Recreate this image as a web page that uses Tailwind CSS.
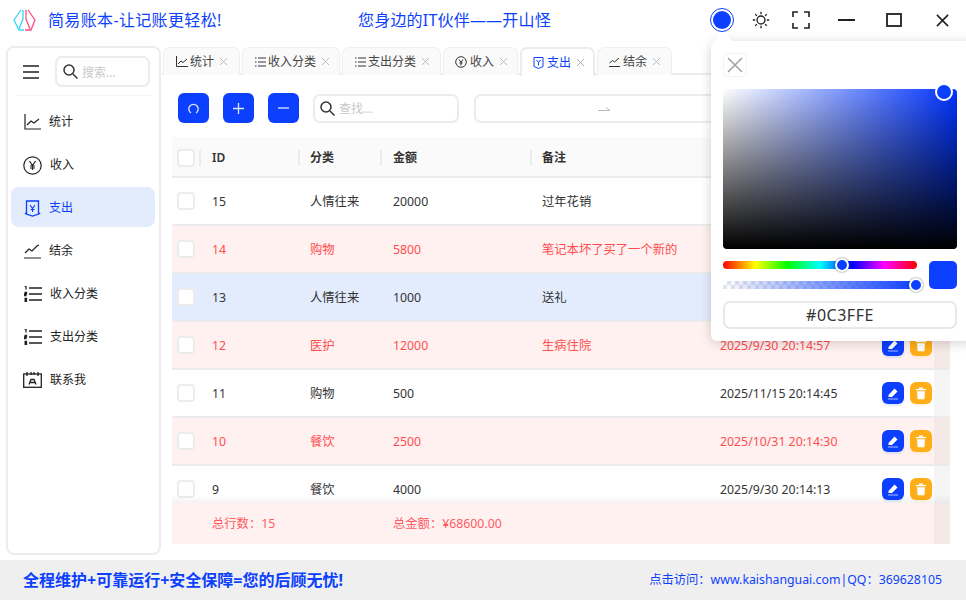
<!DOCTYPE html>
<html lang="zh-CN">
<head>
  <meta charset="UTF-8" />
  <title>简易账本</title>
  <script src="https://cdn.jsdelivr.net/npm/@tailwindcss/browser@4"></script>
</head>
<body class="w-[966px] h-[600px] overflow-hidden bg-white relative text-[#333] text-[12px] font-['Noto_Sans','Noto_Sans_CJK_SC',sans-serif]">
  <!-- title bar -->
  <header class="h-[46px] flex items-center pl-[13px] text-[#0c3ffe] text-[16px]">
    <svg class="w-[23px] h-[24px] -mt-[6px]" viewBox="0 0 23 24" fill="none" stroke-width="1.3">
      <path d="M8 2 L1 12 L6 22 H11" stroke="#33d6ff"/>
      <path d="M15 2 L22 12 L18 22 H12" stroke="#ff4d7d"/>
      <path d="M10 2 V11 L6 21" stroke="#33d6ff"/>
      <path d="M13 2 V11 L17 21" stroke="#ff4d7d"/>
    </svg>
    <span class="ml-[12px] w-[311px] -mt-[6px] whitespace-nowrap tracking-[0.35px]">简易账本-让记账更轻松!</span>
    <span class="-mt-[6px] whitespace-nowrap tracking-[0.2px] -ml-px">您身边的IT伙伴——开山怪</span>
    <div class="flex items-center ml-auto -mt-[6px] relative h-6 w-[250px] shrink-0">
      <span class="absolute left-[-6px] w-[24px] h-[24px] rounded-full border border-[#0c3ffe] p-[2px]"><span class="block w-full h-full rounded-full bg-[#0c3ffe]"></span></span>
      <svg class="absolute left-[36px] w-[18px] h-[18px]" viewBox="0 0 18 18" fill="none" stroke="#222" stroke-width="1.3"><circle cx="9" cy="9" r="4"/><path d="M9 .8v2.4M9 14.8v2.4M.8 9h2.4M14.8 9h2.400M3.200 3.200 4.900 4.900M13.100 13.100l1.700 1.700M3.200 14.800l1.700-1.700M13.100 4.900l1.700-1.700"/></svg>
      <svg class="absolute left-[76px] w-[18px] h-[18px]" viewBox="0 0 18 18" fill="none" stroke="#222" stroke-width="1.6"><path d="M1 6V1h5M12 1h5v5M17 12v5h-5M6 17H1v-5"/></svg>
      <span class="absolute left-[122px] w-[17px] h-[2px] bg-[#222]"></span>
      <span class="absolute left-[170px] w-[16px] h-[14px] border-2 border-[#333]"></span>
      <svg class="absolute left-[220px] w-[13px] h-[13px]" viewBox="0 0 14 14" stroke="#222" stroke-width="1.700"><path d="M1 1l12 12M13 1 1 13"/></svg>
    </div>
  </header>

  <div class="flex h-[508px] pl-[6px]">
    <!-- sidebar -->
    <aside class="w-[155px] h-[509px] shrink-0 border-2 border-[#ececec] rounded-[8px] px-[3px] text-[#222]">
      <div class="flex items-center h-[48px] mx-[5px] border-b border-[#f3f3f3]">
        <svg class="w-[16px] h-[14px] ml-[7px]" viewBox="0 0 16 14" stroke="#222" stroke-width="1.600"><path d="M0 1h16M0 7h16M0 13h16"/></svg>
        <div class="ml-[16px] w-[95px] h-[31px] flex items-center border-2 border-[#ececec] rounded-[7px] pl-[6px] text-[#c8c8c8]">
          <svg class="w-[15px] h-[15px]" viewBox="0 0 15 15" fill="none" stroke="#333" stroke-width="1.500"><circle cx="6" cy="6" r="5"/><path d="m10 10 4.500 4.500"/></svg>
          <span class="ml-[4px] pt-[2px]">搜索...</span>
        </div>
      </div>
      <nav class="mt-[5px] mr-px flex flex-col gap-[3px]">
        <a class="h-[40px] flex items-center pt-[2px] pl-[13px] gap-[8px] rounded-[8px]">
          <svg class="w-[17px] h-[16px]" viewBox="0 0 17 16" fill="none" stroke="#222" stroke-width="1.200"><path d="M1 0v15h16M3 11l4-4 3 2 5-4"/></svg>统计</a>
        <a class="h-[40px] flex items-center pt-[2px] pl-[12px] gap-[8px] rounded-[8px]">
          <svg class="w-[19px] h-[19px]" viewBox="0 0 19 19" fill="none" stroke="#222" stroke-width="1.200"><circle cx="9.500" cy="9.500" r="8.700"/><path d="m6.500 5 3 4.500 3-4.500M9.500 9.500V14M7 10h5M7 12h5"/></svg>收入</a>
        <a class="h-[40px] flex items-center pt-[2px] pl-[13px] gap-[8px] rounded-[8px] bg-[#e3ecfd] text-[#0c3ffe]">
          <svg class="w-[17px] h-[17px]" viewBox="0 0 17 17" fill="none" stroke="#0c3ffe" stroke-width="1.300"><path d="M2.500 1h12v13l-6 2-6-2zM.8 13.500h2M14.200 13.500h2"/><path d="m6 5 2.500 3.500L11 5M8.500 8.500V12M6.500 9.500h4" stroke-width="1.100"/></svg>支出</a>
        <a class="h-[40px] flex items-center pt-[2px] pl-[13px] gap-[8px] rounded-[8px]">
          <svg class="w-[17px] h-[15px]" viewBox="0 0 17 15" fill="none" stroke="#222" stroke-width="1.200"><path d="M1 9l4-4 3 2 5-5 2-1M0 14h17"/></svg>结余</a>
        <a class="h-[40px] flex items-center pt-[2px] pl-[13px] gap-[8px] rounded-[8px]">
          <svg class="w-[18px] h-[16px]" viewBox="0 0 18 16" fill="none" stroke="#222" stroke-width="1.300"><path d="M5 2h13M5 8h13M5 14h13M.5 0h1.500v3.500M.5 6.500h2v1.500h-2v1.500h2M.5 12.500h2v3h-2M.5 14h2" /></svg>收入分类</a>
        <a class="h-[40px] flex items-center pt-[2px] pl-[13px] gap-[8px] rounded-[8px]">
          <svg class="w-[18px] h-[16px]" viewBox="0 0 18 16" fill="none" stroke="#222" stroke-width="1.300"><path d="M5 2h13M5 8h13M5 14h13M.5 0h1.500v3.500M.5 6.500h2v1.500h-2v1.500h2M.5 12.500h2v3h-2M.5 14h2" /></svg>支出分类</a>
        <a class="h-[40px] flex items-center pt-[2px] pl-[12px] gap-[8px] rounded-[8px]">
          <svg class="w-[19px] h-[16px]" viewBox="0 0 19 16" fill="none" stroke="#222" stroke-width="1.300"><rect x=".7" y="2" width="17.600" height="13.300"/><path d="M4 0v4M8 0v3M11 0v3M15 0v4M6 12.500l2-5h3l2 5M7 10.500h5"/></svg>联系我</a>
      </nav>
    </aside>

    <main class="flex-1 min-w-0 pl-[1px]">
      <!-- tabs -->
      <div class="flex gap-[2px] h-[29px] pt-[1px] pl-[1px] border-b-2 border-[#ececec] text-[#444]">
        <div class="w-[77px] h-[28px] bg-[#fafafa] border border-b-0 border-[#f0f0f0] rounded-t-[7px] flex items-center pl-[12px]">
          <svg class="w-[12px] h-[11px] mr-[2px]" viewBox="0 0 12 11" fill="none" stroke="#333"><path d="M.5 0v10.500H12M2 8l3-3 2 1.500L11 3"/></svg>统计<svg class="w-[7px] h-[7px] ml-[6px]" viewBox="0 0 7 7" stroke="#bbb"><path d="M0 0l7 7M7 0 0 7"/></svg></div>
        <div class="w-[98px] h-[28px] bg-[#fafafa] border border-b-0 border-[#f0f0f0] rounded-t-[7px] flex items-center pl-[12px]">
          <svg class="w-[11px] h-[10px] mr-[2px]" viewBox="0 0 11 10" fill="none" stroke="#333"><path d="M3 1h8M3 5h8M3 9h8M0 1h1.500M0 5h1.500M0 9h1.500"/></svg>收入分类<svg class="w-[7px] h-[7px] ml-[6px]" viewBox="0 0 7 7" stroke="#bbb"><path d="M0 0l7 7M7 0 0 7"/></svg></div>
        <div class="w-[99px] h-[28px] bg-[#fafafa] border border-b-0 border-[#f0f0f0] rounded-t-[7px] flex items-center pl-[12px]">
          <svg class="w-[11px] h-[10px] mr-[2px]" viewBox="0 0 11 10" fill="none" stroke="#333"><path d="M3 1h8M3 5h8M3 9h8M0 1h1.500M0 5h1.500M0 9h1.500"/></svg>支出分类<svg class="w-[7px] h-[7px] ml-[6px]" viewBox="0 0 7 7" stroke="#bbb"><path d="M0 0l7 7M7 0 0 7"/></svg></div>
        <div class="w-[75px] h-[28px] bg-[#fafafa] border border-b-0 border-[#f0f0f0] rounded-t-[7px] flex items-center pl-[11px]">
          <svg class="w-[12px] h-[12px] mr-[3px]" viewBox="0 0 12 12" fill="none" stroke="#333"><circle cx="6" cy="6" r="5.300"/><path d="m4 3.500 2 3 2-3M6 6.500V9.500M4.500 7h3"/></svg>收入<svg class="w-[7px] h-[7px] ml-[6px]" viewBox="0 0 7 7" stroke="#bbb"><path d="M0 0l7 7M7 0 0 7"/></svg></div>
        <div class="w-[75px] h-[29px] bg-white border-2 border-b-0 border-[#ececec] rounded-t-[7px] flex items-center pl-[11px] text-[#0c3ffe] relative z-10">
          <svg class="w-[11px] h-[12px] mr-[3px]" viewBox="0 0 11 12" fill="none" stroke="#0c3ffe"><path d="M1 .5h9v9l-4.500 2-4.500-2z"/><path d="m3.500 3 2 2.500 2-2.500M5.500 5.500V8.500"/></svg>支出<svg class="w-[7px] h-[7px] ml-[6px]" viewBox="0 0 7 7" stroke="#aaa"><path d="M0 0l7 7M7 0 0 7"/></svg></div>
        <div class="w-[75px] h-[28px] bg-[#fafafa] border border-b-0 border-[#f0f0f0] rounded-t-[7px] flex items-center pl-[11px]">
          <svg class="w-[11px] h-[10px] mr-[3px]" viewBox="0 0 11 10" fill="none" stroke="#333"><path d="M.5 6 3.500 3.500 5.500 5 10 1M0 9.500h11"/></svg>结余<svg class="w-[7px] h-[7px] ml-[6px]" viewBox="0 0 7 7" stroke="#bbb"><path d="M0 0l7 7M7 0 0 7"/></svg></div>
      </div>

      <!-- toolbar -->
      <div class="flex items-center h-[30px] mt-[18px] ml-[16px] text-[#fff]">
        <button class="w-[31px] h-[30px] rounded-[6px] bg-[#0c3ffe] grid place-items-center">
          <svg class="w-[11px] h-[11px]" viewBox="0 0 11 11" fill="none" stroke="#dfe6ff" stroke-width="1.300"><path d="M3 10A4.700 4.700 0 1 1 8 10"/></svg></button>
        <button class="w-[31px] h-[30px] ml-[14px] rounded-[6px] bg-[#0c3ffe] grid place-items-center">
          <svg class="w-[11px] h-[11px]" viewBox="0 0 11 11" stroke="#dfe6ff" stroke-width="1.300"><path d="M5.500 0v11M0 5.500h11"/></svg></button>
        <button class="w-[31px] h-[30px] ml-[14px] rounded-[6px] bg-[#0c3ffe] grid place-items-center">
          <svg class="w-[11px] h-[2px]" viewBox="0 0 11 2" stroke="#dfe6ff" stroke-width="1.300"><path d="M0 1h11"/></svg></button>
        <div class="w-[146px] h-[29px] ml-[14px] flex items-center border-2 border-[#ececec] rounded-[7px] pl-[5px] text-[#c8c8c8]">
          <svg class="w-[15px] h-[15px]" viewBox="0 0 15 15" fill="none" stroke="#333" stroke-width="1.500"><circle cx="6" cy="6" r="5"/><path d="m10 10 4.500 4.500"/></svg>
          <span class="ml-[4px] pt-[2px]">查找...</span>
        </div>
        <div class="w-[400px] h-[29px] ml-[15px] flex items-center border-2 border-[#ececec] rounded-[7px] pl-[122px]">
          <svg class="w-[12px] h-[5px]" viewBox="0 0 12 5" fill="none" stroke="#bbb"><path d="M0 4.500h12L8 1.500"/></svg>
        </div>
      </div>

      <!-- table -->
      <div class="mt-[14px] ml-[10px] w-[778px] text-[#333] text-[12.300px]">
        <div class="grid grid-cols-[27px_99px_82px_150px_177px_1fr] h-[41px] pt-[2px] items-center bg-[#fafafa] border-b-2 border-[#ececec] font-semibold text-[12px]">
          <span class="w-[18px] h-[18px] ml-[5px] border-2 border-[#ececec] rounded-[4px] bg-white"></span>
          <span class="pl-[11px] border-l-2 border-[#ececec] h-[16px] leading-[16px]">ID</span>
          <span class="pl-[10px] border-l-2 border-[#ececec] h-[16px] leading-[16px]">分类</span>
          <span class="pl-[11px] border-l-2 border-[#ececec] h-[16px] leading-[16px]">金额</span>
          <span class="pl-[10px] border-l-2 border-[#ececec] h-[16px] leading-[16px]">备注</span>
          <span></span>
        </div>
        <div class="h-[325px] overflow-hidden relative">
          <div class="grid grid-cols-[29px_98px_82px_150px_177px_174px_52px_16px] h-[48px] items-center border-b-2 border-[#ececec]">
            <span class="w-[18px] h-[18px] ml-[5px] border-2 border-[#ececec] rounded-[4px] bg-white"></span>
            <span class="pl-[11px] pt-[2px]">15</span><span class="pl-[11px] pt-[2px]">人情往来</span><span class="pl-[12px] pt-[2px]">20000</span><span class="pl-[11px] pt-[2px]">过年花销</span><span></span><span></span><span class="h-full bg-[#f5f5f5]"></span>
          </div>
          <div class="grid grid-cols-[29px_98px_82px_150px_177px_174px_52px_16px] h-[48px] items-center border-b-2 border-[#ececec] bg-[#fff1f0] text-[#ff4d4f]">
            <span class="w-[18px] h-[18px] ml-[5px] border-2 border-[#ececec] rounded-[4px] bg-white"></span>
            <span class="pl-[11px] pt-[2px]">14</span><span class="pl-[11px] pt-[2px]">购物</span><span class="pl-[12px] pt-[2px]">5800</span><span class="pl-[11px] pt-[2px] whitespace-nowrap">笔记本坏了买了一个新的</span><span></span><span></span><span class="h-full bg-[#f5e9e7]"></span>
          </div>
          <div class="grid grid-cols-[29px_98px_82px_150px_177px_174px_52px_16px] h-[48px] items-center border-b-2 border-[#ececec] bg-[#e3ecfd]">
            <span class="w-[18px] h-[18px] ml-[5px] border-2 border-[#ececec] rounded-[4px] bg-white"></span>
            <span class="pl-[11px] pt-[2px]">13</span><span class="pl-[11px] pt-[2px]">人情往来</span><span class="pl-[12px] pt-[2px]">1000</span><span class="pl-[11px] pt-[2px]">送礼</span><span></span><span></span><span class="h-full bg-[#f5f5f5]"></span>
          </div>
          <div class="grid grid-cols-[29px_98px_82px_150px_177px_174px_52px_16px] h-[48px] items-center border-b-2 border-[#ececec] bg-[#fff1f0] text-[#ff4d4f]">
            <span class="w-[18px] h-[18px] ml-[5px] border-2 border-[#ececec] rounded-[4px] bg-white"></span>
            <span class="pl-[11px] pt-[2px]">12</span><span class="pl-[11px] pt-[2px]">医护</span><span class="pl-[12px] pt-[2px]">12000</span><span class="pl-[11px] pt-[2px]">生病住院</span><span class="pl-[12px] pt-[2px] whitespace-nowrap">2025/9/30 20:14:57</span>
            <span class="flex gap-[6px]">
              <button class="w-[22px] h-[22px] rounded-[6px] bg-[#0c3ffe] shadow-[0_2px_2px_rgba(12,63,254,0.12)] grid place-items-center"><svg class="w-[12px] h-[13px]" viewBox="0 0 12 13"><path d="M1.500 8 7.500 1.500l3 3-5.500 5.500H1.500z" fill="#fff"/><path d="M1 12h10" stroke="#aebdff"/></svg></button>
              <button class="w-[22px] h-[22px] rounded-[6px] bg-[#ffae17] shadow-[0_2px_2px_rgba(255,174,23,0.12)] grid place-items-center"><svg class="w-[12px] h-[13px]" viewBox="0 0 12 13" fill="#fff"><path d="M1 2h10v1.300H1zM4 .5h4V2H4zM2 4.300h8l-.6 8H2.600z"/></svg></button>
            </span><span class="h-full bg-[#f5e9e7]"></span>
          </div>
          <div class="grid grid-cols-[29px_98px_82px_150px_177px_174px_52px_16px] h-[48px] items-center border-b-2 border-[#ececec]">
            <span class="w-[18px] h-[18px] ml-[5px] border-2 border-[#ececec] rounded-[4px] bg-white"></span>
            <span class="pl-[11px] pt-[2px]">11</span><span class="pl-[11px] pt-[2px]">购物</span><span class="pl-[12px] pt-[2px]">500</span><span></span><span class="pl-[12px] pt-[2px] whitespace-nowrap">2025/11/15 20:14:45</span>
            <span class="flex gap-[6px]">
              <button class="w-[22px] h-[22px] rounded-[6px] bg-[#0c3ffe] shadow-[0_2px_2px_rgba(12,63,254,0.12)] grid place-items-center"><svg class="w-[12px] h-[13px]" viewBox="0 0 12 13"><path d="M1.500 8 7.500 1.500l3 3-5.500 5.500H1.500z" fill="#fff"/><path d="M1 12h10" stroke="#aebdff"/></svg></button>
              <button class="w-[22px] h-[22px] rounded-[6px] bg-[#ffae17] shadow-[0_2px_2px_rgba(255,174,23,0.12)] grid place-items-center"><svg class="w-[12px] h-[13px]" viewBox="0 0 12 13" fill="#fff"><path d="M1 2h10v1.300H1zM4 .5h4V2H4zM2 4.300h8l-.6 8H2.600z"/></svg></button>
            </span><span class="h-full bg-[#f5f5f5]"></span>
          </div>
          <div class="grid grid-cols-[29px_98px_82px_150px_177px_174px_52px_16px] h-[48px] items-center border-b-2 border-[#ececec] bg-[#fff1f0] text-[#ff4d4f]">
            <span class="w-[18px] h-[18px] ml-[5px] border-2 border-[#ececec] rounded-[4px] bg-white"></span>
            <span class="pl-[11px] pt-[2px]">10</span><span class="pl-[11px] pt-[2px]">餐饮</span><span class="pl-[12px] pt-[2px]">2500</span><span></span><span class="pl-[12px] pt-[2px] whitespace-nowrap">2025/10/31 20:14:30</span>
            <span class="flex gap-[6px]">
              <button class="w-[22px] h-[22px] rounded-[6px] bg-[#0c3ffe] shadow-[0_2px_2px_rgba(12,63,254,0.12)] grid place-items-center"><svg class="w-[12px] h-[13px]" viewBox="0 0 12 13"><path d="M1.500 8 7.500 1.500l3 3-5.500 5.500H1.500z" fill="#fff"/><path d="M1 12h10" stroke="#aebdff"/></svg></button>
              <button class="w-[22px] h-[22px] rounded-[6px] bg-[#ffae17] shadow-[0_2px_2px_rgba(255,174,23,0.12)] grid place-items-center"><svg class="w-[12px] h-[13px]" viewBox="0 0 12 13" fill="#fff"><path d="M1 2h10v1.300H1zM4 .5h4V2H4zM2 4.300h8l-.6 8H2.600z"/></svg></button>
            </span><span class="h-full bg-[#f5e9e7]"></span>
          </div>
          <div class="grid grid-cols-[29px_98px_82px_150px_177px_174px_52px_16px] h-[48px] items-center border-b-2 border-transparent">
            <span class="w-[18px] h-[18px] ml-[5px] border-2 border-[#ececec] rounded-[4px] bg-white"></span>
            <span class="pl-[11px] pt-[2px]">9</span><span class="pl-[11px] pt-[2px]">餐饮</span><span class="pl-[12px] pt-[2px]">4000</span><span></span><span class="pl-[12px] pt-[2px] whitespace-nowrap">2025/9/30 20:14:13</span>
            <span class="flex gap-[6px]">
              <button class="w-[22px] h-[22px] rounded-[6px] bg-[#0c3ffe] shadow-[0_2px_2px_rgba(12,63,254,0.12)] grid place-items-center"><svg class="w-[12px] h-[13px]" viewBox="0 0 12 13"><path d="M1.500 8 7.500 1.500l3 3-5.500 5.500H1.500z" fill="#fff"/><path d="M1 12h10" stroke="#aebdff"/></svg></button>
              <button class="w-[22px] h-[22px] rounded-[6px] bg-[#ffae17] shadow-[0_2px_2px_rgba(255,174,23,0.12)] grid place-items-center"><svg class="w-[12px] h-[13px]" viewBox="0 0 12 13" fill="#fff"><path d="M1 2h10v1.300H1zM4 .5h4V2H4zM2 4.300h8l-.6 8H2.600z"/></svg></button>
            </span><span class="h-full bg-[#f5f5f5]"></span>
          </div>
          <div class="absolute left-0 right-0 bottom-0 h-[8px] bg-linear-to-b from-white/0 to-black/5"></div>
        </div>
        <div class="grid grid-cols-[29px_98px_82px_150px_177px_174px_52px_16px] h-[41px] items-center bg-[#fff1f0] text-[#ff5a5f]">
          <span></span><span class="pl-[11px] pt-[2px] col-span-2">总行数&#xFF1A;15</span><span class="pl-[12px] pt-[2px] col-span-2">总金额&#xFF1A;¥68600.00</span><span></span><span></span><span class="h-full bg-[#f5e9e7]"></span>
        </div>
      </div>
    </main>
  </div>

  <!-- footer -->
  <footer class="mt-[6px] h-[40px] bg-[#efefef] flex items-center pl-[23px] pr-[24px] text-[#0c3ffe]">
    <span class="text-[16px] font-bold whitespace-nowrap">全程维护+可靠运行+安全保障=您的后顾无忧!</span>
    <span class="ml-auto text-[12.300px] whitespace-nowrap">点击访问&#xFF1A;www.kaishanguai.com|QQ&#xFF1A;369628105</span>
  </footer>

  <!-- colour picker popover -->
  <div class="absolute left-[711px] top-[41px] w-[262px] h-[300px] bg-white rounded-[6px] shadow-[0_2px_12px_rgba(0,0,0,0.18)] pl-[12px] pt-[12px]">
    <span class="absolute left-[6px] -top-[6px] w-[12px] h-[12px] rotate-45 bg-white"></span>
    <button class="w-[24px] h-[24px] border border-[#f3f3f3] rounded-[4px] grid place-items-center">
      <svg class="w-[16px] h-[16px]" viewBox="0 0 16 16" stroke="#a0a0a0" stroke-width="1.500"><path d="M1 1l14 14M15 1 1 15"/></svg>
    </button>
    <div class="relative mt-[12px] w-[234px] h-[160px] rounded-[4px] bg-linear-to-r/srgb from-white to-[#0033ff]">
      <div class="absolute inset-0 rounded-[4px] bg-linear-to-t/srgb from-black to-black/0"></div>
      <span class="absolute left-[212px] -top-[6px] w-[18px] h-[18px] rounded-full bg-[#0c3ffe] border-2 border-white"></span>
    </div>
    <div class="flex mt-[12px] w-[234px]">
      <div class="w-[194px] flex flex-col gap-[12px]">
        <div class="relative h-[8px] rounded-full bg-[linear-gradient(to_right,red,yellow,lime,cyan,blue,magenta,red)]">
          <span class="absolute left-[112px] -top-[3px] w-[14px] h-[14px] rounded-full bg-[#0c3ffe] border-2 border-white shadow-[0_0_2px_rgba(0,0,0,0.6)]"></span>
        </div>
        <div class="relative h-[8px] bg-[repeating-conic-gradient(#e6e6e6_0_25%,#fff_0_50%)] bg-size-[8px_8px]">
          <div class="absolute inset-0 bg-linear-to-r/srgb from-[#0c3ffe]/0 to-[#0c3ffe]"></div>
          <span class="absolute left-[186px] -top-[3px] w-[14px] h-[14px] rounded-full bg-[#0c3ffe] border-2 border-white shadow-[0_0_2px_rgba(0,0,0,0.6)]"></span>
        </div>
      </div>
      <span class="ml-[12px] w-[28px] h-[28px] rounded-[5px] bg-[#0c3ffe]"></span>
    </div>
    <div class="mt-[12px] w-[234px] h-[28px] border-2 border-[#e8e8e8] rounded-[7px] grid place-items-center text-[16px] text-[#333] tracking-[0.5px]">#0C3FFE</div>
  </div>
</body>
</html>
